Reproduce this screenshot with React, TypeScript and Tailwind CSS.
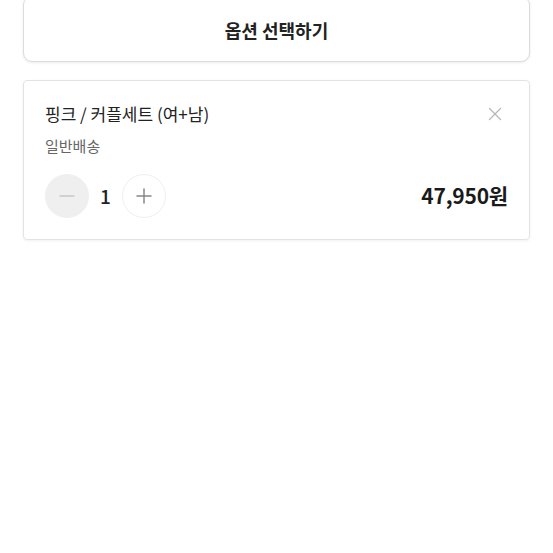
import { X, Minus, Plus } from "lucide-react";

const App = () => {
  return (
    <div
      className="w-[553px] h-[553px] bg-white overflow-hidden px-[23px]"
      style={{ fontFamily: '"Noto Sans CJK KR", "Noto Sans", sans-serif' }}
    >
      {/* Option select button */}
      <button className="w-full h-[66px] -mt-[4px] mb-[18px] flex items-center justify-center rounded-[9px] border border-[#dcdcdc] bg-white shadow-[0_1px_3px_rgba(0,0,0,0.08)] text-[18px] font-semibold text-[#222] pt-[2px]">
        옵션 선택하기
      </button>

      {/* Selected option card */}
      <div className="h-[160px] rounded-[4px] border border-[#e3e3e3] shadow-[0_1px_3px_rgba(0,0,0,0.06)] pl-[21px] pr-[21px] pt-[18px]">
        <div className="flex items-start justify-between">
          <div className="text-[17px] leading-[30px] text-[#222]">
            핑크 / 커플세트 (여+남)
          </div>
          <X size={22} strokeWidth={1.3} className="text-[#b5b5b5] mt-[4px] mr-[2px]" />
        </div>
        <div className="text-[15px] leading-[24px] text-[#666] mt-[5px]">일반배송</div>
        <div className="flex items-center justify-between mt-[16px]">
          <div className="flex items-center">
            <div className="w-[44px] h-[44px] rounded-full bg-[#efefef] flex items-center justify-center">
              <Minus size={24} strokeWidth={1.5} className="text-[#c8c8c8]" />
            </div>
            <div className="w-[33px] text-center text-[19px] font-medium text-[#222]">1</div>
            <div className="w-[44px] h-[44px] rounded-full bg-white border border-[#efefef] flex items-center justify-center">
              <Plus size={24} strokeWidth={1.5} className="text-[#888]" />
            </div>
          </div>
          <div className="text-[21px] font-semibold text-[#1a1a1a] tracking-[-0.2px]">47,950원</div>
        </div>
      </div>
    </div>
  );
};

export default App;
